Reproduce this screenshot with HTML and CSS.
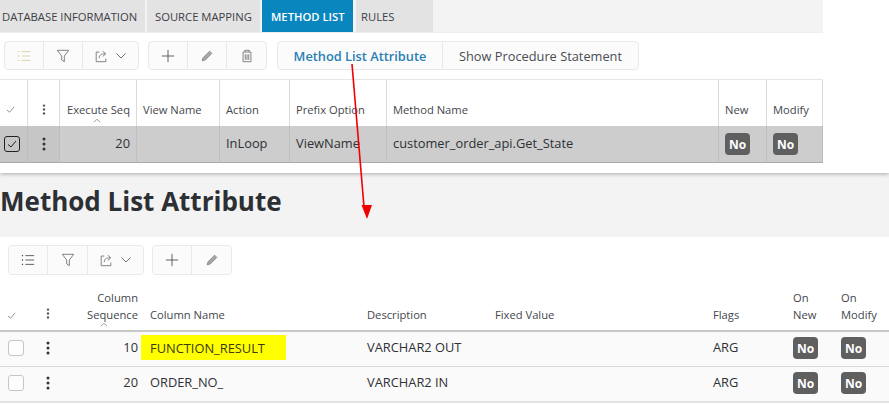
FILE: index.html
```html
<!DOCTYPE html>
<html lang="en">
<head>
<meta charset="utf-8">
<title>Method List</title>
<link rel="stylesheet" href="styles.css">
</head>
<body>
<svg class="defs" width="0" height="0" aria-hidden="true">
  <symbol id="i-list" viewBox="0 0 16 16"><path d="M5 3h10M5 8h10M5 13h10" fill="none" stroke="currentColor"/><path d="M1 3h2M1 8h2M1 13h2" fill="none" stroke="currentColor" stroke-width="1.6" stroke-dasharray="1.4 .6"/></symbol>
  <symbol id="i-filter" viewBox="0 0 16 16"><path d="M1.500 1.500h13L9.500 8v6.500l-3-2V8z" fill="none" stroke="currentColor"/></symbol>
  <symbol id="i-export" viewBox="0 0 16 16"><path d="M6 3.500H2.500v11h11V11" fill="none" stroke="currentColor"/><path d="M6 10.500C6 7 8 5.500 12.500 5.500M10 2.500l3.500 3-3.500 3" fill="none" stroke="currentColor"/></symbol>
  <symbol id="i-chev" viewBox="0 0 12 8"><path d="M1.500 1.500 6 6l4.500-4.500" fill="none" stroke="currentColor"/></symbol>
  <symbol id="i-plus" viewBox="0 0 16 16"><path d="M8 1v14M1 8h14" fill="none" stroke="currentColor"/></symbol>
  <symbol id="i-pen" viewBox="0 0 16 16"><path d="M2.500 13.500l1-3.500L11 2.500 13.500 5 6 12.500z" fill="currentColor" fill-opacity=".6" stroke="currentColor" stroke-width=".8"/></symbol>
  <symbol id="i-trash" viewBox="0 0 16 16"><path d="M3.500 3.500h9v11h-9zM5.500 3.500v-2h5v2M6 6v6.500M8 6v6.500M10 6v6.500" fill="none" stroke="currentColor"/></symbol>
  <symbol id="i-check" viewBox="0 0 10 10"><path d="M1 5.500 4 8l5-6" fill="none" stroke="currentColor"/></symbol>
  <symbol id="i-dots" viewBox="0 0 4 14"><circle cx="2" cy="2" r="1.500" fill="currentColor"/><circle cx="2" cy="7" r="1.500" fill="currentColor"/><circle cx="2" cy="12" r="1.500" fill="currentColor"/></symbol>
  <symbol id="i-sort" viewBox="0 0 10 5"><path d="M1 4.500 5 1l4 3.500" fill="none" stroke="currentColor"/></symbol>
</svg>

<section class="panel">
  <nav class="tabs">
    <div class="tab tab-db">Database Information</div>
    <div class="tab tab-src">Source Mapping</div>
    <div class="tab tab-active">Method List</div>
    <div class="tab tab-rules">Rules</div>
  </nav>

  <div class="toolbar toolbar-top">
    <div class="btn-group">
      <div class="tool tool-w39 tool-pale"><svg class="icon"><use href="#i-list"/></svg></div>
      <div class="tool tool-w39"><svg class="icon"><use href="#i-filter"/></svg></div>
      <div class="tool tool-w55"><svg class="icon"><use href="#i-export"/></svg><svg class="chev"><use href="#i-chev"/></svg></div>
    </div>
    <div class="btn-group group-gap">
      <div class="tool tool-w39"><svg class="icon icon-dark"><use href="#i-plus"/></svg></div>
      <div class="tool tool-w39"><svg class="icon"><use href="#i-pen"/></svg></div>
      <div class="tool tool-w39"><svg class="icon"><use href="#i-trash"/></svg></div>
    </div>
    <div class="btn-group text-group">
      <div class="text-btn text-btn-link">Method List Attribute</div>
      <div class="text-btn">Show Procedure Statement</div>
    </div>
  </div>

  <div class="grid grid-top">
    <div class="cell head"><svg class="check-mini"><use href="#i-check"/></svg></div>
    <div class="cell head center"><svg class="dots-mini"><use href="#i-dots"/></svg></div>
    <div class="cell head right sorted">Execute Seq<svg class="sort"><use href="#i-sort"/></svg></div>
    <div class="cell head">View Name</div>
    <div class="cell head">Action</div>
    <div class="cell head">Prefix Option</div>
    <div class="cell head">Method Name</div>
    <div class="cell head">New</div>
    <div class="cell head">Modify</div>

    <div class="cell data tone"><span class="box box-on"><svg class="box-check"><use href="#i-check"/></svg></span></div>
    <div class="cell data tone center"><svg class="dots"><use href="#i-dots"/></svg></div>
    <div class="cell data right">20</div>
    <div class="cell data"></div>
    <div class="cell data">InLoop</div>
    <div class="cell data">ViewName</div>
    <div class="cell data">customer_order_api.Get_State</div>
    <div class="cell data"><span class="badge">No</span></div>
    <div class="cell data"><span class="badge">No</span></div>
  </div>
</section>

<header class="page-title">
  <h1>Method List Attribute</h1>
</header>

<section class="detail">
  <div class="toolbar toolbar-bottom">
    <div class="btn-group">
      <div class="tool tool-w39"><svg class="icon icon-dark"><use href="#i-list"/></svg></div>
      <div class="tool tool-w40"><svg class="icon"><use href="#i-filter"/></svg></div>
      <div class="tool tool-w55"><svg class="icon"><use href="#i-export"/></svg><svg class="chev"><use href="#i-chev"/></svg></div>
    </div>
    <div class="btn-group group-gap">
      <div class="tool tool-w39"><svg class="icon icon-dark"><use href="#i-plus"/></svg></div>
      <div class="tool tool-w39"><svg class="icon"><use href="#i-pen"/></svg></div>
    </div>
  </div>

  <div class="grid grid-bottom">
    <div class="cell head2"><svg class="check-mini"><use href="#i-check"/></svg></div>
    <div class="cell head2 center"><svg class="dots-mini"><use href="#i-dots"/></svg></div>
    <div class="cell head2 right sorted">Column<br>Sequence<svg class="sort"><use href="#i-sort"/></svg></div>
    <div class="cell head2">Column Name</div>
    <div class="cell head2">Description</div>
    <div class="cell head2">Fixed Value</div>
    <div class="cell head2">Flags</div>
    <div class="cell head2">On<br>New</div>
    <div class="cell head2">On<br>Modify</div>

    <div class="cell row"><span class="box"></span></div>
    <div class="cell row center"><svg class="dots"><use href="#i-dots"/></svg></div>
    <div class="cell row right">10</div>
    <div class="cell row"><span class="mark">FUNCTION_RESULT</span></div>
    <div class="cell row">VARCHAR2 OUT</div>
    <div class="cell row"></div>
    <div class="cell row">ARG</div>
    <div class="cell row"><span class="badge">No</span></div>
    <div class="cell row"><span class="badge">No</span></div>

    <div class="cell row last"><span class="box"></span></div>
    <div class="cell row last center"><svg class="dots"><use href="#i-dots"/></svg></div>
    <div class="cell row last right">20</div>
    <div class="cell row last">ORDER_NO_</div>
    <div class="cell row last">VARCHAR2 IN</div>
    <div class="cell row last"></div>
    <div class="cell row last">ARG</div>
    <div class="cell row last"><span class="badge">No</span></div>
    <div class="cell row last"><span class="badge">No</span></div>
  </div>
</section>

<svg class="arrow" width="889" height="404" viewBox="0 0 889 404" aria-hidden="true">
  <path d="M352 64 364 207" fill="none" stroke="#f00000" stroke-width="1.600"/>
  <path d="M361.500 205 372 205 367 219z" fill="#f00000"/>
</svg>
</body>
</html>
```

FILE: styles.css
```css
* { box-sizing: border-box; }

html, body {
  margin: 0;
  height: 404px;
  overflow: hidden;
}

body {
  position: relative;
  background: #f3f3f3;
  color: #33363a;
  font-family: "Open Sans", "Liberation Sans", sans-serif;
  font-size: 12.850px;
}

.defs { position: absolute; }

/* top panel */
.panel {
  height: 173px;
  background: #fff;
  box-shadow: 0 1px 4px rgba(0, 0, 0, .3);
}

.tabs {
  display: flex;
  width: 823px;
  height: 33px;
  background: #f3f3f3;
  border-bottom: 1px solid #eee;
  font-size: 11.250px;
  text-transform: uppercase;
}

.tab {
  display: flex;
  align-items: center;
  background: #e3e3e3;
  color: #3d4045;
  margin-right: 2px;
}

.tab-db { width: 145px; padding-left: 2px; }
.tab-src { width: 113px; padding-left: 8px; }
.tab-active { width: 91px; padding-left: 9px; background: #0a86bf; color: #fff; font-weight: 600; margin-right: 3px; }
.tab-rules { width: 77px; padding-left: 5px; }

/* toolbars */
.toolbar { display: flex; }
.toolbar-top { padding: 8px 0 9px 4px; height: 46px; }
.toolbar-bottom { padding: 8px 0 0 8px; height: 38px; }

.btn-group {
  display: flex;
  height: 29px;
  background: #fbfbfb;
  border: 1px solid #e9e9e9;
  border-radius: 4px;
}

.toolbar-bottom .btn-group { height: 30px; }
.group-gap { margin-left: 9px; }
.toolbar-bottom .group-gap { margin-left: 8px; }
.text-group { margin-left: 10px; }

.tool {
  display: flex;
  align-items: center;
  justify-content: center;
  gap: 7px;
  border-right: 1px solid #e9e9e9;
  color: #6f7276;
}

.tool:last-child { border-right: 0; }
.tool-w39 { width: 39px; }
.tool-w40 { width: 40px; }
.tool-w55 { width: 55px; }
.tool-pale { color: #d8cfa6; }

.icon { width: 14px; height: 14px; }
.icon-dark { color: #4a4d52; }
.chev { width: 12px; height: 8px; }

.text-btn {
  display: flex;
  align-items: center;
  justify-content: center;
  width: 165px;
  border-right: 1px solid #e9e9e9;
  font-size: 12.800px;
  color: #4a4d52;
}

.text-btn:last-child { width: 195px; border-right: 0; }
.text-btn-link { color: #2a7fb4; font-weight: 600; }

/* grids */
.grid { display: grid; }

.grid-top {
  width: 823px;
  grid-template-columns: 28px 32px 77px 83px 70px 97px 332px 48px 56px;
  grid-template-rows: 46px 37px;
  border-top: 1px solid #e6e6e6;
}

.grid-bottom {
  grid-template-columns: 32px 32px 79px 217px 128px 218px 80px 48px 55px;
  grid-template-rows: 57px 35px 36px;
}

.cell {
  position: relative;
  display: flex;
  align-items: center;
  padding-left: 7px;
  min-width: 0;
  white-space: nowrap;
}

.grid-top .cell { padding-left: 6px; }

.head {
  align-items: flex-end;
  padding-bottom: 9px;
  font-size: 11.200px;
  color: #44474c;
  border-right: 1px solid #dcdcdc;
}

.head2 {
  align-items: flex-end;
  padding-bottom: 7px;
  font-size: 11.200px;
  line-height: 17px;
  color: #44474c;
  border-bottom: 2px solid #c8c8c8;
}

.data {
  background: #cdcdcd;
  border-right: 1px solid #bfbfbf;
  border-bottom: 1px solid #a9a9a9;
  padding-bottom: 2px;
  color: #2e3135;
}

.data.tone { background: #c6c6c6; }

.row {
  background: #fafafa;
  border-bottom: 1px solid #d8d8d8;
  padding-bottom: 4px;
  color: #2e3135;
}

.row.last { border-bottom: 2px solid #e2e2e2; }

.grid-top .right, .right { justify-content: flex-end; padding-left: 0; padding-right: 6px; text-align: right; }
.grid-bottom .right { padding-right: 5px; }
.grid-top .center, .center { justify-content: center; padding-left: 0; }
.head.center, .head2.center { padding-bottom: 11px; }

.sort {
  position: absolute;
  right: 35px;
  bottom: 3px;
  width: 8px;
  height: 5px;
  color: #888;
}

.check-mini { width: 9px; height: 9px; margin-bottom: 3px; color: #888; }
.dots-mini { width: 4px; height: 11px; color: #555; }
.dots { width: 4px; height: 14px; margin-top: 2px; color: #333; }

.box {
  display: block;
  width: 16px;
  height: 16px;
  margin-top: 2px;
  border: 1px solid #c6c6c6;
  border-radius: 3px;
  background: #fdfdfd;
  margin-left: 1px;
}

.grid-top .box { margin-left: -2px; }

.box-on {
  border-color: #222;
  background: transparent;
  padding: 2px;
}

.box-check { display: block; width: 10px; height: 10px; color: #222; }

.badge {
  display: inline-flex;
  align-items: center;
  justify-content: center;
  width: 25px;
  height: 22px;
  margin-top: 2px;
  border-radius: 4px;
  background: #5f5f5f;
  color: #fff;
  font-size: 12px;
  font-weight: 700;
}

.mark {
  display: flex;
  align-items: center;
  width: 145px;
  height: 25px;
  margin-top: 1px;
  margin-left: -9px;
  padding-left: 9px;
  background: #ffff00;
  color: #3a3a10;
}

/* heading */
.page-title {
  height: 64px;
  padding-top: 11px;
}

h1 {
  margin: 0;
  font-size: 26px;
  line-height: 34px;
  font-weight: 700;
  color: #2c2f33;
}

.detail {
  height: 167px;
  background: #fff;
}

.arrow {
  position: absolute;
  top: 0;
  left: 0;
  pointer-events: none;
}
```
